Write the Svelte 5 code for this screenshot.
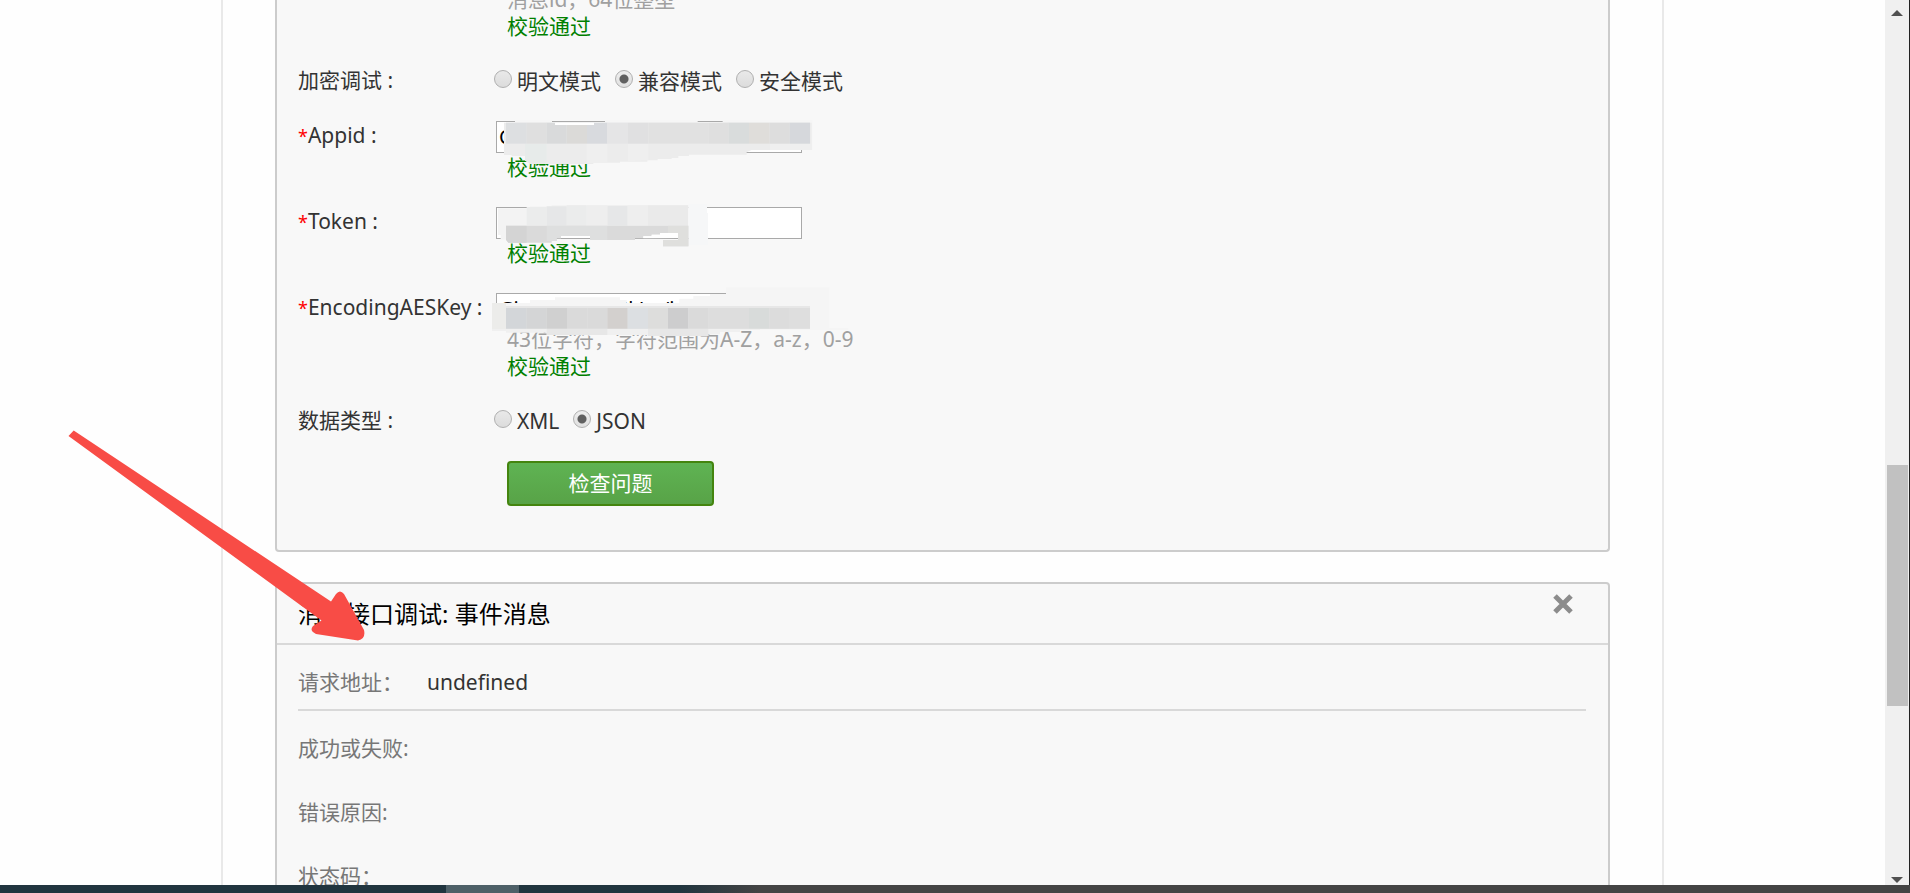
<script>
  let mode = $state('compat');
  let dataType = $state('json');
  let appid = $state('C');
  let token = $state('');
  let aesKey = $state('Gi\u00a0\u00a0\u00a0\u00a0\u00a0\u00a0\u00a0\u00a0\u00a0\u00a0\u00a0\u00a0\u00a0\u00a0\u00a0\u00a0\u00a0\u00a0\u00a0\u00a0JkLu/i');
  let showResult = $state(true);

  const modes = [
    { value: 'plain', label: '明文模式' },
    { value: 'compat', label: '兼容模式' },
    { value: 'safe', label: '安全模式' }
  ];

  const dataTypes = [
    { value: 'xml', label: 'XML' },
    { value: 'json', label: 'JSON' }
  ];

  const results = ['成功或失败:', '错误原因:', '状态码：'];

  // [x, width, fill]
  const appidBlocks = [
    [78, 62, '#dddfe1'], [140, 60, '#dfdfdf'], [200, 60, '#d9dadb'], [260, 61, '#dbdad8'],
    [321, 61, '#d8dade'], [382, 62, '#e5e5e6'], [444, 61, '#e0e0e1'], [505, 180, '#e1e1e1'],
    [685, 61, '#dfdfdf'], [746, 61, '#d9dcdc'], [807, 62, '#dfddda'], [869, 60, '#dddddd'],
    [929, 61, '#d6d8dc']
  ];
  const aesBlocks = [
    [78, 62, '#d3d6d9'], [140, 60, '#d4d5d6'], [200, 61, '#d0d0d0'], [261, 61, '#dadada'],
    [322, 60, '#dadada'], [382, 61, '#d3d0ce'], [443, 61, '#dcdfe2'], [504, 60, '#dddddc'],
    [564, 61, '#cdcdce'], [625, 61, '#dadada'], [686, 121, '#dddddd'], [807, 61, '#d8dbda'],
    [868, 61, '#dcdcdc'], [929, 61, '#dedede']
  ];
</script>

<div class="screen">
  <div class="browser">
    <main class="page">
      <div class="frame">
        <form class="panel form" onsubmit={(e) => e.preventDefault()}>
          <div class="row first">
            <span class="label"></span>
            <div class="control">
              <p class="hint">消息id，64位整型</p>
              <p class="ok">校验通过</p>
            </div>
          </div>

          <div class="row choice" role="radiogroup" aria-labelledby="mode-label">
            <span class="label" id="mode-label">加密调试 :</span>
            <div class="radios">
              {#each modes as item}
                <label><input type="radio" name="mode" value={item.value} bind:group={mode} />{item.label}</label>
              {/each}
            </div>
          </div>

          <div class="row">
            <label class="label" for="appid"><em>*</em>Appid :</label>
            <div class="control">
              <input class="text" id="appid" type="text" bind:value={appid} />
              <p class="ok">校验通过</p>
              <svg class="mask appid" viewBox="0 0 1050 240" aria-hidden="true">
                <path fill="#f6f6f6" d="M105 30H216V38H375V30H653V38H728V30H998V120H105z" />
                <path fill="#ececec" d="M72 38H995V120H815L800 126V134H627V138H595V144H575V147H533V151H502V155H420V158H340V162H150L135 152V138H95V135H72z" />
                <path fill="#e7ebea" d="M135 101H200V158H150L135 150z" />
                <path fill="#efefef" d="M320 101H382V158H320zM444 101H505V151L444 154zM870 101H995V120H870z" />
                {#each appidBlocks as [x, w, fill]}
                  <rect {x} y="38" width={w} height="63" {fill} />
                {/each}
                <rect x="225" y="38" width="117" height="7" fill="#fff" />
              </svg>
            </div>
          </div>

          <div class="row">
            <label class="label" for="token"><em>*</em>Token :</label>
            <div class="control">
              <input class="text" id="token" type="text" bind:value={token} />
              <p class="ok">校验通过</p>
              <svg class="mask token" viewBox="0 0 1050 225" aria-hidden="true">
                <path fill="#f3f3f3" d="M54 40H150V34H215V30H625V92H78V134H62V120H54z" />
                <path fill="#ebecec" d="M140 36H200V92H140zM260 31H320V92H260z" />
                <path fill="#e6e7e8" d="M200 34H260V92H200zM382 32H443V92H382z" />
                <path fill="#eeeeee" d="M320 31H382V92H320zM443 31H504V92H443z" />
                <path fill="#eaeaea" d="M504 31H625V92H504z" />
                <path fill="#f6f7f8" d="M625 27H681V54H684V150H625z" />
                <path fill="#dadada" d="M78 92H625V154H549V135H594V114H540V119H515V124H490V130H465V135H330V123H243V130H230V138H215V143H85L78 134z" />
                <path fill="#d4d4d4" d="M78 92H140V143H85L78 134z" />
                <path fill="#dedfdf" d="M200 92H382V135H330V123H243V130H230V138H200z" />
                <path fill="#dfdfdd" d="M564 92H625V154H549V135H594V114H564z" />
                <path fill="#fff" d="M243 123H330V129H243zM490 130V124H515V119H540V114H594V129z" />
              </svg>
            </div>
          </div>

          <div class="row">
            <label class="label" for="aes"><em>*</em>EncodingAESKey :</label>
            <div class="control">
              <input class="text" id="aes" type="text" bind:value={aesKey} />
              <p class="hint">43位字符，字符范围为A-Z，a-z，0-9</p>
              <p class="ok">校验通过</p>
              <svg class="mask aes" viewBox="0 0 1200 240" aria-hidden="true">
                <path fill="#f5f5f5" d="M738 22H1048V144H1105V150H840V141H990V83H36V69H150V60H225V52H420V60H440V69H598V56H640V48H690V42H738z" />
                <path fill="#ececea" d="M36 69H78V147H36z" />
                <path fill="#f0f0f0" d="M36 147H840V150H780V156H720V163H685V168H505V165H200V158H78V153H36z" />
                <path fill="#e7e7e7" d="M78 78H990V147H78zM200 147H382V165H200zM504 147H685V168H504z" />
                {#each aesBlocks as [x, w, fill]}
                  <rect {x} y="84" width={w} height="62" {fill} />
                {/each}
              </svg>
            </div>
          </div>

          <div class="row choice" role="radiogroup" aria-labelledby="type-label">
            <span class="label" id="type-label">数据类型 :</span>
            <div class="radios">
              {#each dataTypes as item}
                <label><input type="radio" name="type" value={item.value} bind:group={dataType} />{item.label}</label>
              {/each}
            </div>
          </div>

          <div class="row">
            <span class="label"></span>
            <button class="check" type="submit">检查问题</button>
          </div>
        </form>

        {#if showResult}
          <section class="panel result">
            <header>
              <h2>消息接口调试: 事件消息</h2>
              <button class="close" type="button" aria-label="关闭" onclick={() => (showResult = false)}>
                <svg viewBox="0 0 22 22" aria-hidden="true">
                  <path d="M3 3L19 19M19 3L3 19" fill="none" stroke="#8c8c8c" stroke-width="5" />
                </svg>
              </button>
            </header>
            <div class="body">
              <div class="url"><span>请求地址：</span><b>undefined</b></div>
              {#each results as name}
                <p>{name}</p>
              {/each}
            </div>
          </section>
        {/if}
      </div>
    </main>

    <div class="scrollbar" aria-hidden="true">
      <svg viewBox="0 0 12 6"><path d="M6 0L12 6H0z" fill="#505050" /></svg>
      <div class="track"><div class="thumb"></div></div>
      <svg viewBox="0 0 12 6"><path d="M0 0H12L6 6z" fill="#505050" /></svg>
    </div>
  </div>

  <div class="taskbar"><span></span></div>

  <svg class="arrow" viewBox="0 0 300 216" aria-hidden="true">
    <path
      fill="#f84c46"
      d="M8.700 5.500L266 176.500L271 169Q275 164 279 169L299 205Q301 214 293 215.500L251 209Q244 206 248 201L256.500 195.500L3.500 11z"
    />
  </svg>
</div>

<style>
  :global(body) {
    margin: 0;
    background: #fefefe;
  }

  .screen {
    position: relative;
    display: flex;
    flex-direction: column;
    height: 100vh;
    overflow: hidden;
    color: #333;
    font: 21px/27px "Noto Sans", "Noto Sans CJK SC", sans-serif;
  }

  .browser {
    flex: 1;
    display: flex;
    min-height: 0;
  }

  .page {
    flex: 1;
    min-width: 0;
    overflow: hidden;
  }

  .frame {
    box-sizing: border-box;
    max-width: 1443px;
    margin: 0 auto;
    padding: 0 52px;
    border: solid #e9e9e9;
    border-width: 0 2px;
  }

  .panel {
    border: 2px solid #ccc;
    border-radius: 4px;
    background: #f8f8f8;
  }

  .form {
    display: flex;
    flex-direction: column;
    gap: 26px;
    padding: 0 21px 44px;
    border-top: 0;
    border-radius: 0 0 4px 4px;
  }

  .row {
    display: flex;
    align-items: flex-start;
  }

  .first {
    margin-top: -14px;
  }

  .choice {
    padding-top: 1px;
  }

  .label {
    flex: 0 0 198px;
    white-space: nowrap;
  }

  .row > label.label {
    padding-top: 1px;
  }

  em {
    color: #f00;
    font-size: 18px;
    font-style: normal;
  }

  .control {
    position: relative;
  }

  p {
    margin: 0;
  }

  .control p {
    padding-left: 11px;
  }

  .hint {
    color: #a0a0a0;
  }

  .ok {
    color: #008000;
  }

  .text {
    display: block;
    box-sizing: border-box;
    width: 306px;
    height: 32px;
    margin: 0 0 1px;
    padding: 0 2px 2px;
    border: 1px solid #a9a9a9;
    background: #fff;
    color: #000;
    font: 20px "Noto Sans", sans-serif;
  }

  .mask {
    position: absolute;
    left: -16px;
    width: 350px;
    pointer-events: none;
  }

  .mask.appid {
    top: -11px;
  }

  .mask.token {
    top: -12px;
  }

  .mask.aes {
    top: -13px;
    width: 400px;
  }

  .radios {
    display: flex;
    gap: 14px;
    margin-left: -2px;
  }

  .radios label {
    display: flex;
    gap: 5px;
    padding-top: 1px;
  }

  .radios input {
    appearance: none;
    box-sizing: border-box;
    width: 18px;
    height: 18px;
    margin: 2px 0 0;
    border: 1px solid #b0b0b0;
    border-radius: 50%;
    background: linear-gradient(#e9e9e9, #dcdcdc);
  }

  .radios input:checked {
    background: radial-gradient(circle, #606060 4px, transparent 5px), linear-gradient(#eee, #e0e0e0);
  }

  .check {
    width: 207px;
    height: 45px;
    margin-left: 11px;
    padding: 0;
    border: 2px solid #44850f;
    border-radius: 4px;
    background: linear-gradient(#5fb353, #58a347);
    color: #fff;
    font: inherit;
  }

  .result {
    height: 400px;
    margin-top: 30px;
  }

  header {
    display: flex;
    justify-content: space-between;
    align-items: flex-start;
    padding: 0 34px 0 21px;
    border-bottom: 2px solid #d9d9d9;
  }

  h2 {
    margin: 0;
    color: #000;
    font-size: 24px;
    font-weight: 400;
    line-height: 59px;
  }

  .close {
    width: 22px;
    height: 22px;
    margin-top: 9px;
    padding: 0;
    border: 0;
    background: none;
  }

  .close svg {
    display: block;
  }

  .body {
    padding: 0 22px 0 21px;
    color: #777;
  }

  .url {
    display: flex;
    gap: 24px;
    padding: 24px 0 13px;
    border-bottom: 2px solid #d9d9d9;
  }

  .url b {
    color: #333;
    font-weight: 400;
  }

  .body p {
    margin: 24px 0 37px;
  }

  .body p + p {
    margin-top: 0;
  }

  .scrollbar {
    display: flex;
    flex-direction: column;
    align-items: center;
    box-sizing: border-box;
    width: 25px;
    padding: 10px 0 2px;
    border-right: 1px solid #222;
    background: #f0f0f0;
  }

  .scrollbar svg {
    width: 12px;
    height: 6px;
  }

  .track {
    flex: 1;
    display: flex;
    flex-direction: column;
    align-self: stretch;
  }

  .track::before {
    content: '';
    flex: 449;
  }

  .track::after {
    content: '';
    flex: 171;
  }

  .thumb {
    flex: 241;
    margin: 0 1px 0 2px;
    background: #c1c1c1;
  }

  .taskbar {
    height: 8px;
    padding-left: 446px;
    background: linear-gradient(90deg, #21353f 680px, #444 760px);
  }

  .taskbar span {
    display: block;
    width: 73px;
    height: 8px;
    background: #4e6068;
  }

  .arrow {
    position: absolute;
    left: 65px;
    top: 425px;
    width: 300px;
    height: 216px;
  }
</style>
